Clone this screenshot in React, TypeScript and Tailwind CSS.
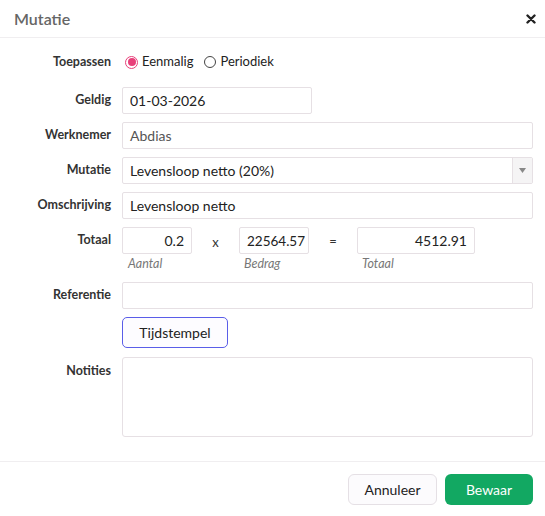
import React from 'react';

const font = { fontFamily: 'Lato, "Noto Sans", "Liberation Sans", sans-serif' };

function Label({ children, top = false }: { children: React.ReactNode; top?: boolean }) {
  return (
    <div
      className={`w-[111px] shrink-0 text-right text-[12.5px] font-bold text-[#333] ${
        top ? 'pt-[5px]' : 'flex items-center justify-end'
      }`}
    >
      {children}
    </div>
  );
}

function Row({ children, className = '' }: { children: React.ReactNode; className?: string }) {
  return <div className={`flex gap-[11px] ${className}`}>{children}</div>;
}

const inputCls =
  'h-[27px] border border-[#e6e0e4] rounded-[2px] px-[7px] text-[14px] text-[#222] bg-white outline-none';

export default function App() {
  return (
    <div className="w-[545px] h-[516px] bg-white flex flex-col" style={font}>
      {/* header */}
      <div className="h-[38px] border-b border-[#f0eef0] flex items-center justify-between pl-[14px] pr-[7px]">
        <span className="text-[16px] font-semibold text-[#666]">Mutatie</span>
        <svg width="10" height="10" viewBox="0 0 10 10" className="mr-[2px]">
          <path d="M1.5 1.5 L8.5 8.5 M8.5 1.5 L1.5 8.5" stroke="#222" strokeWidth="2.4" strokeLinecap="round" />
        </svg>
      </div>

      {/* body */}
      <div className="flex-1 pt-[13px] pr-[12px] flex flex-col">
        <Row className="h-[22px] mb-[14px]">
          <Label>Toepassen</Label>
          <div className="flex items-center text-[13px] text-[#222]">
            <span className="w-[13px] h-[13px] rounded-full border-[1.5px] border-[#e8407a] flex items-center justify-center ml-[3px]">
              <span className="w-[8px] h-[8px] rounded-full bg-[#e8407a]" />
            </span>
            <span className="ml-[4px]">Eenmalig</span>
            <span className="w-[12px] h-[12px] rounded-full border border-[#444] ml-[11px]" />
            <span className="ml-[4px]">Periodiek</span>
          </div>
        </Row>

        <Row className="mb-[8px]">
          <Label>Geldig</Label>
          <input className={`${inputCls} w-[190px]`} defaultValue="01-03-2026" />
        </Row>

        <Row className="mb-[8px]">
          <Label>Werknemer</Label>
          <div className={`${inputCls} flex-1 flex items-center bg-[#f5f4f5] text-[#555]`}>Abdias</div>
        </Row>

        <Row className="mb-[8px]">
          <Label>Mutatie</Label>
          <div className="h-[27px] flex-1 flex border border-[#e6e0e4] rounded-[2px] text-[14px] text-[#222]">
            <div className="flex-1 flex items-center px-[7px]">Levensloop netto (20%)</div>
            <div className="w-[20px] border-l border-[#e6e0e4] bg-[#f5f4f5] flex items-center justify-center">
              <svg width="7" height="5" viewBox="0 0 7 5">
                <path d="M0 0 H7 L3.5 5 Z" fill="#888" />
              </svg>
            </div>
          </div>
        </Row>

        <Row className="mb-[8px]">
          <Label>Omschrijving</Label>
          <input className={`${inputCls} flex-1`} defaultValue="Levensloop netto" />
        </Row>

        <Row className="mb-[8px]">
          <div className="w-[111px] shrink-0 text-right text-[12.5px] font-bold text-[#333] h-[27px] flex items-center justify-end">
            Totaal
          </div>
          <div className="flex flex-col">
            <div className="flex items-center">
              <input className={`${inputCls} w-[70px] text-right`} defaultValue="0.2" />
              <span className="w-[47px] text-center text-[13px] text-[#333] pt-[4px]">x</span>
              <input
                className="h-[27px] w-[70px] border border-[#e6e0e4] rounded-[2px] px-[3px] text-[13.5px] text-[#222] bg-white outline-none text-right"
                defaultValue="22564.57"
              />
              <span className="w-[48px] text-center text-[13px] text-[#333] pt-[2px]">=</span>
              <input className={`${inputCls} w-[118px] text-right`} defaultValue="4512.91" />
            </div>
            <div className="flex h-[20px] items-center text-[12.5px] italic text-[#777]">
              <span className="w-[117px] pl-[6px]">Aantal</span>
              <span className="w-[118px] pl-[5px]">Bedrag</span>
              <span className="pl-[5px]">Totaal</span>
            </div>
          </div>
        </Row>

        <Row className="mb-[8px]">
          <Label>Referentie</Label>
          <input className={`${inputCls} flex-1`} />
        </Row>

        <Row className="mb-[9px]">
          <div className="w-[111px] shrink-0" />
          <button className="h-[31px] w-[106px] rounded-[5px] border border-[#5a5de8] bg-[#fdfcff] text-[14px] text-[#222]">
            Tijdstempel
          </button>
        </Row>

        <Row>
          <Label top>Notities</Label>
          <textarea className="h-[80px] flex-1 border border-[#e6e0e4] rounded-[3px] resize-none outline-none" />
        </Row>
      </div>

      {/* footer */}
      <div className="h-[55px] border-t border-[#f0eef0] flex items-center justify-end gap-[8px] pr-[12px]">
        <button className="h-[31px] w-[89px] rounded-[6px] border border-[#e5e0e5] bg-[#fcfbfd] text-[14px] text-[#222]">
          Annuleer
        </button>
        <button className="h-[31px] w-[88px] rounded-[6px] bg-[#12a862] text-[14px] text-white">Bewaar</button>
      </div>
    </div>
  );
}
